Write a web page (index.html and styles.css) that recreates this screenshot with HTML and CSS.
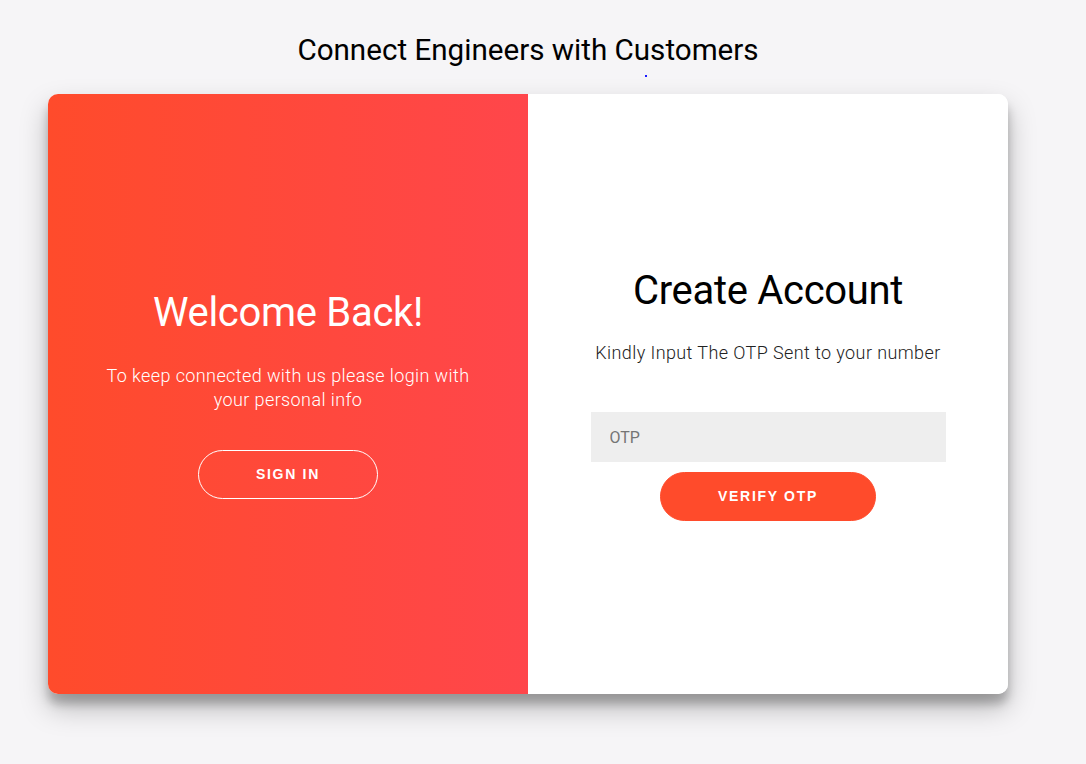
FILE: index.html
```html
<!DOCTYPE html>
<html lang="en">
<head>
<meta charset="utf-8">
<title>Connect Engineers with Customers</title>
<link rel="stylesheet" href="styles.css">
</head>
<body>
<header class="page-head">
  <h2 class="page-title">Connect Engineers with Customers</h2>
  <div class="dot-row"><span class="dot"></span></div>
</header>
<main class="card">
  <section class="panel panel-overlay">
    <h1 class="panel-title">Welcome Back!</h1>
    <p class="panel-text">To keep connected with us please login with your personal info</p>
    <button class="btn btn-ghost" type="button">Sign In</button>
  </section>
  <section class="panel panel-form">
    <h1 class="panel-title dark">Create Account</h1>
    <p class="panel-text dark">Kindly Input The OTP Sent to your number</p>
    <input class="otp-input" type="text" placeholder="OTP">
    <button class="btn btn-solid" type="button">Verify OTP</button>
  </section>
</main>
</body>
</html>
```
FILE: styles.css
```css
* { box-sizing: border-box; }
body {
  margin: 0;
  padding-right: 30px;
  background: #f6f5f7;
  font-family: Roboto, "Liberation Sans", sans-serif;
  height: 764px;
}
.page-head {
  padding-top: 31px;
  text-align: center;
}
.page-title {
  margin: 0;
  font-weight: 400;
  font-size: 29.6px;
  line-height: 38px;
  color: #000;
}
.dot-row {
  height: 25px;
  text-align: center;
  line-height: 0;
}
.dot {
  display: inline-block;
  width: 2px;
  height: 2px;
  background: #1a1aff;
  margin-left: 236px;
  margin-top: 6px;
}
.card {
  width: 960px;
  height: 600px;
  margin: 0 auto;
  display: grid;
  grid-template-columns: 1fr 1fr;
  border-radius: 10px;
  overflow: hidden;
  background: #fff;
  box-shadow: 0 14px 28px rgba(0,0,0,0.25), 0 10px 10px rgba(0,0,0,0.22);
}
.panel {
  display: flex;
  flex-direction: column;
  align-items: center;
  justify-content: center;
  text-align: center;
}
.panel-overlay {
  background: linear-gradient(to right, #ff4b2b, #ff464b);
  color: #fff;
  padding: 0 50px;
}
.panel-form {
  background: #fff;
  padding: 0 50px;
}
.panel-title {
  margin: 0;
  font-size: 40px;
  font-weight: 400;
  line-height: 47px;
  letter-spacing: -0.3px;
}
.panel-title.dark { color: #000; }
.panel-text {
  margin: 28px 0 38px;
  font-size: 18px;
  font-weight: 300;
  line-height: 24px;
  letter-spacing: 0.4px;
}
.panel-text.dark {
  color: #222;
  margin: 27px 0 47px;
}
.otp-input {
  width: 355px;
  height: 50px;
  border: none;
  outline: none;
  background: #eee;
  padding: 0 19px;
  font-family: Roboto, "Liberation Sans", sans-serif;
  font-size: 16px;
  color: #333;
}
.otp-input::placeholder { color: #757575; }
.btn {
  font-family: "Liberation Sans", Arial, sans-serif;
  font-weight: 700;
  font-size: 14px;
  line-height: 17px;
  letter-spacing: 1.7px;
  text-transform: uppercase;
  border-radius: 25px;
  padding: 15px 57px;
  cursor: pointer;
}
.btn-ghost {
  background: transparent;
  border: 1px solid #fff;
  color: #fff;
}
.btn-solid {
  margin-top: 10px;
  background: #ff4b2b;
  border: 1px solid #ff4b2b;
  color: #fff;
}
```
